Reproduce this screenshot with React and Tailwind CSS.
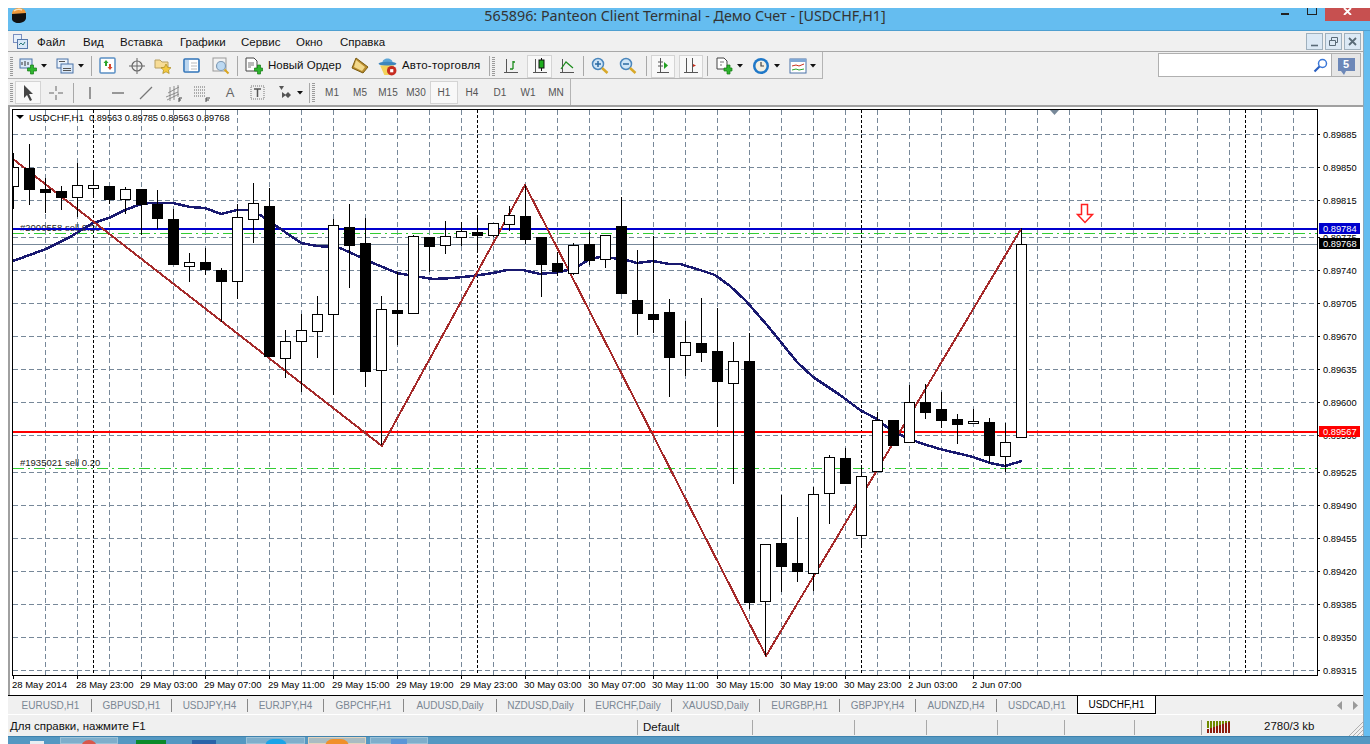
import React from 'react';

const candles = [
  [13, 167, 186, 153, 209, 'w'], [29, 168, 190, 144, 205, 'b'], [45, 189, 193, 178, 213, 'b'], [61, 191, 198, 186, 210, 'b'],
  [77, 185, 197, 163, 217, 'w'], [93, 185, 188, 173, 197, 'w'], [109, 186, 200, 186, 204, 'b'], [125, 189, 199, 187, 214, 'w'],
  [141, 189, 205, 189, 235, 'b'], [157, 204, 219, 190, 229, 'b'], [173, 219, 265, 209, 265, 'b'], [189, 262, 266, 253, 282, 'w'],
  [205, 262, 270, 248, 275, 'b'], [221, 270, 282, 268, 322, 'b'], [237, 217, 281, 204, 299, 'w'], [253, 203, 219, 183, 243, 'w'],
  [269, 206, 357, 188, 357, 'b'], [285, 341, 358, 330, 378, 'w'], [301, 330, 341, 314, 392, 'w'], [317, 314, 331, 296, 358, 'w'],
  [333, 225, 314, 219, 395, 'w'], [349, 227, 246, 204, 288, 'b'], [365, 243, 372, 218, 387, 'b'], [381, 309, 370, 296, 445, 'w'],
  [397, 310, 314, 272, 345, 'b'], [413, 236, 313, 235, 313, 'w'], [429, 237, 247, 237, 272, 'b'], [445, 236, 245, 221, 254, 'w'],
  [461, 231, 237, 222, 246, 'w'], [477, 232, 236, 217, 251, 'b'], [493, 223, 235, 223, 237, 'w'], [509, 215, 224, 206, 231, 'w'],
  [525, 216, 240, 185, 244, 'b'], [541, 237, 265, 237, 297, 'b'], [557, 263, 272, 252, 276, 'b'], [573, 245, 273, 243, 275, 'w'],
  [589, 244, 261, 232, 265, 'b'], [605, 235, 259, 235, 268, 'w'], [621, 226, 294, 197, 294, 'b'], [637, 300, 314, 250, 335, 'b'],
  [653, 314, 320, 236, 333, 'b'], [669, 312, 358, 299, 397, 'b'], [685, 342, 355, 321, 376, 'w'], [701, 343, 353, 298, 362, 'b'],
  [717, 351, 382, 308, 427, 'b'], [733, 361, 383, 342, 484, 'w'], [749, 361, 603, 333, 609, 'b'], [765, 544, 601, 544, 656, 'w'],
  [781, 543, 567, 495, 592, 'b'], [797, 563, 572, 517, 582, 'b'], [813, 494, 573, 487, 591, 'w'], [829, 457, 493, 455, 524, 'w'],
  [845, 458, 484, 448, 484, 'b'], [861, 476, 535, 468, 545, 'w'], [877, 420, 471, 412, 471, 'w'], [893, 420, 446, 420, 446, 'b'],
  [909, 402, 442, 385, 442, 'w'], [925, 402, 413, 384, 419, 'b'], [941, 409, 421, 392, 428, 'b'], [957, 419, 425, 414, 444, 'b'],
  [973, 421, 423, 409, 423, 'w'], [989, 422, 456, 418, 463, 'b'], [1005, 442, 456, 423, 472, 'w'], [1021, 244, 437, 228, 437, 'w'],
];

const maLine = '13,261 46,249 70,237 93,223 109,218 125,210 141,204 150,203 173,203 190,207 205,208 221,214 237,210 248,210 262,216 285,232 301,243 317,246 333,247 340,248 360,257 373,263 397,273 420,277 433,279 453,278 473,276 493,273 507,270 523,270 540,274 560,272 575,268 590,259 600,257 623,259 637,263 653,261 669,264 680,264 700,270 715,275 730,286 745,300 767,325 797,362 813,377 840,395 860,410 877,419 888,428 903,436 920,443 940,449 973,457 990,463 1005,466 1022,461';

const priceRows = [
  [134, '0.89885'], [167, '0.89850'], [200, '0.89815'], [237, '0.89775'], [270, '0.89740'], [303, '0.89705'], [336, '0.89670'], [369, '0.89635'], [402, '0.89600'],
  [435, '0.89560'], [472, '0.89525'], [505, '0.89490'], [538, '0.89455'], [571, '0.89420'], [604, '0.89385'], [637, '0.89350'], [670, '0.89315'],
];

const timeLabels = ['28 May 2014', '28 May 23:00', '29 May 03:00', '29 May 07:00', '29 May 11:00', '29 May 15:00', '29 May 19:00', '29 May 23:00', '30 May 03:00', '30 May 07:00', '30 May 11:00', '30 May 15:00', '30 May 19:00', '30 May 23:00', '2 Jun 03:00', '2 Jun 07:00'];

const gridX = Array.from({ length: 40 }, (_, i) => 45 + i * 32);
const separatorX = [93, 477, 861, 1245];

const tabs = [
  ['EURUSD,H1', 'w-[82px]'], ['GBPUSD,H1', 'w-[80px]'], ['USDJPY,H4', 'w-[76px]'], ['EURJPY,H4', 'w-[76px]'], ['GBPCHF,H1', 'w-[80px]'],
  ['AUDUSD,Daily', 'w-[93px]'], ['NZDUSD,Daily', 'w-[88px]'], ['EURCHF,Daily', 'w-[87px]'], ['XAUUSD,Daily', 'w-[88px]'], ['EURGBP,H1', 'w-[80px]'],
  ['GBPJPY,H4', 'w-[76px]'], ['AUDNZD,H4', 'w-[81px]'], ['USDCAD,H1', 'w-[80px]'],
];

const Grip = ({ className = '' }) => (
  <div className={`w-[3px] h-[19px] shrink-0 bg-[repeating-linear-gradient(to_bottom,#9a9a9a_0,#9a9a9a_1px,transparent_1px,transparent_2px)] ${className}`} />
);

const Sep = ({ className = '' }) => <div className={`w-px h-[20px] shrink-0 bg-[#a8a8a8] ${className}`} />;

const Arrow = ({ className = '' }) => (
  <div className={`w-[6px] shrink-0 flex justify-center ${className}`}>
    <svg width="6" height="4" viewBox="0 0 6 4"><path d="M0 0h6L3 3.500z" fill="#111" /></svg>
  </div>
);

const Slot = ({ className = 'w-7', active, children }) => (
  <div className={`shrink-0 h-[23px] flex items-center justify-center ${active ? 'bg-[#f8f8f8] border border-[#d4d4d4]' : ''} ${className}`}>
    {children}
  </div>
);

const Ico = ({ children, size = 18 }) => (
  <svg width={size} height={size} viewBox="0 0 18 18" fill="none">{children}</svg>
);

const Plus = () => <path d="M10 8h3V5h3v3h3v3h-3v3h-3v-3h-3z" transform="translate(-1.500 3)" fill="#2fb52f" stroke="#127a12" strokeWidth=".7" />;

const NewChartIcon = () => (
  <Ico><rect x="1" y="2" width="12" height="9" fill="#dbe9f8" stroke="#4a73a8" /><path d="M3 8V5M6 9V4M9 8V5" stroke="#333" /><Plus /></Ico>
);
const ProfileIcon = () => (
  <Ico><rect x="1" y="2" width="11" height="9" fill="#eaf2fb" stroke="#4a73a8" /><rect x="5" y="7" width="12" height="9" fill="#dbe9f8" stroke="#4a73a8" /><path d="M3 4.500h6M7 11.500h8M7 13.500h8" stroke="#555" /></Ico>
);
const WatchIcon = () => (
  <Ico><rect x="1" y="1" width="15" height="15" rx="1" fill="#fff" stroke="#5a8fc4" strokeWidth="1.500" /><path d="M6 9V6H4.500L7 3l2.500 3H8v3z" fill="#2da52d" /><path d="M10 7v3H8.500l2.500 3 2.500-3H12V7z" fill="#d9452b" /></Ico>
);
const CrossIcon = () => (
  <Ico><circle cx="9" cy="9" r="5" stroke="#666" strokeWidth="1.200" /><path d="M9 1v16M1 9h16" stroke="#666" /></Ico>
);
const FolderStarIcon = () => (
  <Ico><path d="M1 3h5l2 2h6v6H1z" fill="#f7dc96" stroke="#b8a060" /><path d="M12 7l1.600 3.300 3.400.4-2.500 2.400.7 3.400-3.200-1.700-3.200 1.700.7-3.400L7 10.700l3.400-.4z" fill="#f4c93e" stroke="#a98a20" strokeWidth=".7" /></Ico>
);
const NavIcon = () => (
  <Ico><rect x="1" y="2" width="15" height="13" rx="1" fill="#fff" stroke="#2f73b8" strokeWidth="1.600" /><rect x="2" y="3" width="4" height="11" fill="#bcd6ef" /><path d="M8 6h6M8 9h6M8 12h6" stroke="#bbb" /></Ico>
);
const ZoomDocIcon = () => (
  <Ico><rect x="1" y="1" width="13" height="13" fill="#f2f2f2" stroke="#999" /><circle cx="9" cy="9" r="4.500" fill="#bcd9f2" stroke="#7f9bb5" strokeWidth="1.200" /><path d="M12.500 12.500l4 4" stroke="#d9a520" strokeWidth="2" /></Ico>
);
const OrderIcon = () => (
  <Ico><path d="M1 1h8l3 3v10H1z" fill="#fff" stroke="#444" /><path d="M3 6h6M3 8h6M3 10h3" stroke="#777" /><path d="M10 8h3V5h3v3h2v3h-2v3h-3v-3h-3z" transform="translate(-.5 3)" fill="#2fb52f" stroke="#127a12" strokeWidth=".7" /></Ico>
);
const BookIcon = () => (
  <Ico><path d="M5 1l12 9-5 6-11-5z" fill="#b98c2e" stroke="#7a5c12" /><path d="M5 3l9 7-3 4-8-4z" fill="#f2d88a" /></Ico>
);
const AutoIcon = () => (
  <Ico size={19}><path d="M4 6c0-6 10-6 10 0z" fill="#5ea6d6" /><ellipse cx="9" cy="6.500" rx="8.500" ry="2" fill="#3e86bd" /><path d="M2 8h13v3l-2 6H6z" fill="#f3d25a" /><circle cx="13" cy="13" r="4.500" fill="#c62b20" /><rect x="11.500" y="11.500" width="3" height="3" fill="#fff" /></Ico>
);
const BarsIcon = () => (
  <Ico><path d="M4.500 2v13M2 15.500h14" stroke="#555" /><path d="M11 4v8M11 12H8M11 5h2" stroke="#1d8c1d" strokeWidth="1.300" /></Ico>
);
const CandleIcon = () => (
  <Ico><path d="M4.500 2v13M2 15.500h14" stroke="#555" /><path d="M10.500 1v13" stroke="#111" /><rect x="8" y="3" width="5" height="8" fill="#1fae1f" stroke="#111" /></Ico>
);
const LineIcon = () => (
  <Ico><path d="M4.500 2v13M2 15.500h14" stroke="#555" /><path d="M3 12l5-7 7 6" stroke="#1d8c1d" strokeWidth="1.200" /></Ico>
);
const MagIcon = ({ plus }) => (
  <Ico><circle cx="7" cy="7" r="5.500" fill="#cfe5f7" stroke="#4a86bc" strokeWidth="1.500" /><path d={plus ? 'M4 7h6M7 4v6' : 'M4 7h6'} stroke="#2b6aa3" strokeWidth="1.500" /><path d="M11 11l5.500 5" stroke="#d8a828" strokeWidth="2.500" /></Ico>
);
const ScrollIcon = () => (
  <Ico><path d="M6.500 1v14M3 15.500h12M4 5h5M4 9h5" stroke="#555" /><path d="M10 5l4 3.500-4 3.500z" fill="#22a022" /></Ico>
);
const ShiftIcon = () => (
  <Ico><path d="M4.500 1v14M2 15.500h14M10.500 1v14" stroke="#555" /><path d="M11 7l3 1.500-3 1.500z" fill="#c8321f" /></Ico>
);
const TemplateIcon = () => (
  <Ico><path d="M1 1h7l3 3v8H1z" fill="#fff" stroke="#444" /><path d="M4 5h4M4 8h2" stroke="#777" /><path d="M10 8h3V5h3v3h2v3h-2v3h-3v-3h-3z" transform="translate(-2 3)" fill="#2fb52f" stroke="#127a12" strokeWidth=".7" /></Ico>
);
const ClockIcon = () => (
  <Ico><circle cx="9" cy="9" r="8" fill="#1f78c8" /><circle cx="9" cy="9" r="5.500" fill="#f3efe2" /><path d="M9 5v4h3" stroke="#444" strokeWidth="1.200" /></Ico>
);
const IndicatorIcon = () => (
  <Ico><rect x="1" y="2" width="16" height="14" fill="#fff" stroke="#4a73a8" /><rect x="1" y="2" width="16" height="3" fill="#7fa8d6" /><path d="M3 9l4-1 3 1 5-2" stroke="#c8321f" /><path d="M3 13l4-1 3 1 5-1" stroke="#2da52d" /></Ico>
);

const ChartSvg = () => (
  <svg className="block" width="1353" height="588" viewBox="10 107 1353 588">
    <defs>
      <clipPath id="plot"><rect x="13" y="110" width="1304" height="565" /></clipPath>
    </defs>
    <g shapeRendering="crispEdges">
      {priceRows.map(([y]) => (
        <line key={y} x1="13" x2="1317" y1={y + 0.5} y2={y + 0.5} stroke="#778899" strokeDasharray="5 3" />
      ))}
      {gridX.map((x) => (
        <line key={x} x1={x + 0.5} x2={x + 0.5} y1="110" y2="675" stroke="#778899" strokeDasharray="5 3" />
      ))}
      {separatorX.map((x) => (
        <line key={x} x1={x + 0.5} x2={x + 0.5} y1="110" y2="675" stroke="#000" strokeDasharray="3 2" />
      ))}
    </g>
    <text x="20" y="231" className="text-[9.5px] fill-[#222]">#2000558 sell 0.20</text>
    <text x="20" y="466" className="text-[9.5px] fill-[#222]">#1935021 sell 0.20</text>
    <g shapeRendering="crispEdges">
      <line x1="13" x2="1317" y1="233.500" y2="233.500" stroke="#32cd32" strokeDasharray="11 4 2 4" />
      <line x1="13" x2="1317" y1="468.500" y2="468.500" stroke="#32cd32" strokeDasharray="11 4 2 4" />
      <line x1="13" x2="1317" y1="244.500" y2="244.500" stroke="#778899" />
      <line x1="13" x2="1317" y1="229" y2="229" stroke="#0000cd" strokeWidth="2" />
      <line x1="13" x2="1317" y1="432" y2="432" stroke="#ff0000" strokeWidth="2" />
    </g>
    <g clipPath="url(#plot)">
      <polyline points={maLine} fill="none" stroke="#191970" strokeWidth="2.500" shapeRendering="crispEdges" />
      <polyline points="13,159 382,446 525,185 766,656 1021,229" fill="none" stroke="#a52a2a" strokeWidth="2" shapeRendering="crispEdges" />
      <g shapeRendering="crispEdges">
        {candles.map(([x, top, bottom, high, low, kind]) => (
          <g key={x}>
            <line x1={x + 0.5} x2={x + 0.5} y1={high} y2={low} stroke="#000" />
            {kind === 'b' ? (
              <rect x={x - 5} y={top} width="11" height={bottom - top} fill="#000" />
            ) : (
              <rect x={x - 4.5} y={top + 0.5} width="10" height={bottom - top} fill="#fff" stroke="#000" />
            )}
          </g>
        ))}
      </g>
    </g>
    <path d="M1081.500 204.500h6v10h5l-7.500 8-7.500-8h4z" fill="#fff" stroke="#ff2020" strokeWidth="1.500" />
    <path d="M1050 110h9l-4.500 5z" fill="#778899" />
    <g shapeRendering="crispEdges" stroke="#000">
      <line x1="12.500" x2="12.500" y1="109" y2="676" />
      <line x1="12" x2="1318" y1="109.500" y2="109.500" />
      <line x1="12" x2="1318" y1="675.500" y2="675.500" />
      <line x1="1317.500" x2="1317.500" y1="109" y2="676" />
      {priceRows.map(([y]) => <line key={y} x1="1317" x2="1320" y1={y + 0.5} y2={y + 0.5} />)}
      {timeLabels.map((t, i) => <line key={t} x1={13.5 + i * 64} x2={13.5 + i * 64} y1="675" y2="679" />)}
    </g>
    {priceRows.map(([y, label]) => (
      <text key={label} x="1323" y={y + 3.5} className="text-[9.3px] fill-black">{label}</text>
    ))}
    <rect x="1319" y="223" width="41" height="11" fill="#0000cd" />
    <text x="1323" y="232" className="text-[9.3px] fill-white">0.89784</text>
    <rect x="1319" y="238" width="41" height="11" fill="#000" />
    <text x="1323" y="247" className="text-[9.3px] fill-white">0.89768</text>
    <rect x="1319" y="426" width="41" height="11" fill="#ff0000" />
    <text x="1323" y="435" className="text-[9.3px] fill-white">0.89567</text>
    {timeLabels.map((t, i) => (
      <text key={t} x={12 + i * 64} y="688" className="text-[9.5px] fill-black">{t}</text>
    ))}
    <path d="M16 115h8l-4 4z" fill="#000" />
    <text x="29" y="121" className="text-[9.8px] fill-black">USDCHF,H1</text>
    <text x="89" y="121" className="text-[9.2px] fill-black">0.89563 0.89785 0.89563 0.89768</text>
  </svg>
);

const ConnectionBars = () => (
  <svg width="24" height="14" viewBox="0 0 24 14" shapeRendering="crispEdges">
    {Array.from({ length: 8 }, (_, i) => (
      <g key={i}>
        <rect x={i * 3} y="1" width="2" height={7 - i * 0.5} fill="#6f8a00" />
        <rect x={i * 3} y={9 - i} width="2" height={4 + i} fill="#8f1c0c" />
      </g>
    ))}
  </svg>
);

export default function App() {
  return (
    <div className="w-[1370px] h-[744px] overflow-hidden bg-white pt-2 pl-2 font-['Liberation_Sans',Arial,sans-serif] text-black flex flex-col">
      {/* title bar */}
      <div className="h-[23px] shrink-0 bg-[#65bdf0] border-b border-[#4f9fd0] flex items-start relative">
        <svg className="ml-[3px] shrink-0" width="16" height="15" viewBox="0 0 16 15">
          <path d="M1 6C1 2 4 0 8 0s7 2 7 6z" fill="#ef9a3c" />
          <path d="M1 6l14-1v5c0 3-4 5-8 5-3 0-6-2-6-4z" fill="#111" />
          <path d="M3 3c2-2 6-2 8-1" stroke="#fbe2b8" strokeWidth="1.500" fill="none" />
        </svg>
        <div className="w-[1170px] shrink-0 ml-[73px] text-center text-[14.300px] leading-[16px] text-[#333] font-['Noto_Sans',sans-serif]">
          565896: Panteon Client Terminal - Демо Счет - [USDCHF,H1]
        </div>
        <div className="ml-auto flex items-start">
          <div className="w-[8px] h-[2px] bg-[#222] mt-[5px] mr-[18px]" />
          <div className="w-[10px] h-[7px] border border-[#222] border-t-0 mr-[8px]" />
          <div className="w-[45px] h-[13px] bg-[#c75050] flex justify-center overflow-hidden">
            <svg width="9" height="7" viewBox="0 0 9 7"><path d="M1 0l3.500 3.500L8 0M1 7l3.500-3.500L8 7" stroke="#fff" strokeWidth="1.800" fill="none" /></svg>
          </div>
        </div>
      </div>

      <div className="flex-1 flex min-h-0">
        <div className="w-[1355px] shrink-0 bg-[#f0f0f0] flex flex-col">
          {/* menu */}
          <div className="h-[21px] shrink-0 border-b border-[#a8a8a8] flex items-center text-[11.500px] leading-[16px] text-[#111]">
            <svg className="ml-[5px] shrink-0" width="15" height="15" viewBox="0 0 15 15">
              <rect x=".5" y=".5" width="8" height="8" fill="#e7f0fa" stroke="#7a8fc0" />
              <rect x="4.500" y="5.500" width="10" height="9" fill="#d7e6f7" stroke="#5577aa" />
              <path d="M6 11l2-2 2 2 2-3" stroke="#2c7a7a" fill="none" />
            </svg>
            <span className="ml-[9px] mt-[2px] w-[46px]">Файл</span>
            <span className="mt-[2px] w-[37px]">Вид</span>
            <span className="mt-[2px] w-[60px]">Вставка</span>
            <span className="mt-[2px] w-[61px]">Графики</span>
            <span className="mt-[2px] w-[55px]">Сервис</span>
            <span className="mt-[2px] w-[44px]">Окно</span>
            <span className="mt-[2px]">Справка</span>
            <div className="ml-auto mr-[2px] flex gap-[2px]">
              {['min', 'restore', 'close'].map((name) => (
                <div key={name} className="w-[17px] h-[17px] bg-[#dce9f5] border border-[#9fb0bd] flex items-center justify-center">
                  <svg width="11" height="11" viewBox="0 0 11 11" fill="none" stroke="#5a6b78">
                    {name === 'min' && <path d="M2 9.500h7" strokeWidth="1.600" />}
                    {name === 'restore' && <path d="M1.500 4.500h6v5h-6zM3.500 4V1.500h6v5H8" />}
                    {name === 'close' && <path d="M2 2l7 7M9 2l-7 7" strokeWidth="1.800" />}
                  </svg>
                </div>
              ))}
            </div>
          </div>

          {/* main toolbar */}
          <div className="h-[27px] shrink-0 flex">
            <div className="w-[815px] shrink-0 border-b border-r border-[#b4b4b4] pt-[2px] flex items-center text-[11.500px] text-[#111]">
              <Grip className="ml-[2px] mr-px" />
              <Slot className="w-[27px]"><NewChartIcon /></Slot>
              <Arrow />
              <Slot className="w-[26px] ml-[5px]"><ProfileIcon /></Slot>
              <Arrow />
              <Sep className="ml-[7px]" />
              <Slot className="w-7 ml-[2px]"><WatchIcon /></Slot>
              <Slot className="w-[30px]"><CrossIcon /></Slot>
              <Slot className="w-[22px]"><FolderStarIcon /></Slot>
              <Slot className="w-9"><NavIcon /></Slot>
              <Slot className="w-[22px]"><ZoomDocIcon /></Slot>
              <Sep className="ml-[5px]" />
              <Slot className="w-5 ml-[6px]"><OrderIcon /></Slot>
              <span className="ml-1 w-[74px] whitespace-nowrap">Новый Ордер</span>
              <Slot className="w-5 ml-2"><BookIcon /></Slot>
              <Slot className="w-5 ml-[7px]"><AutoIcon /></Slot>
              <span className="ml-[5px] w-[78px] tracking-[0.2px] whitespace-nowrap">Авто-торговля</span>
              <Sep className="ml-[9px]" />
              <Grip className="ml-[2px]" />
              <Slot className="w-7 ml-[2px]"><BarsIcon /></Slot>
              <Slot className="w-[25px] ml-[2px]" active><CandleIcon /></Slot>
              <Slot className="w-7 ml-px"><LineIcon /></Slot>
              <Sep className="ml-[2px]" />
              <Slot className="w-7 ml-[2px]"><MagIcon plus /></Slot>
              <Slot className="w-7"><MagIcon /></Slot>
              <Sep className="ml-1" />
              <Slot className="w-6 ml-1" active><ScrollIcon /></Slot>
              <Slot className="w-6 ml-1" active><ShiftIcon /></Slot>
              <Sep className="ml-1" />
              <Slot className="w-6 ml-[5px]"><TemplateIcon /></Slot>
              <Arrow />
              <Slot className="w-[22px] ml-[7px]"><ClockIcon /></Slot>
              <Arrow className="ml-[2px]" />
              <Slot className="w-[22px] ml-[7px]"><IndicatorIcon /></Slot>
              <Arrow className="ml-px" />
            </div>
            <div className="ml-auto mr-[2px] mt-px h-[24px] flex border border-[#b0b0b0]">
              <div className="w-[172px] bg-white flex items-center justify-end pr-[3px]">
                <svg width="15" height="15" viewBox="0 0 15 15" fill="none">
                  <circle cx="9.500" cy="5.500" r="4" stroke="#3b78d8" strokeWidth="1.500" />
                  <path d="M6.500 8.500L1.500 13.500" stroke="#2a5fc0" strokeWidth="2.200" />
                </svg>
              </div>
              <div className="w-[29px] bg-[#e6e6e6] border-l border-[#b0b0b0] flex items-center justify-center">
                <div className="relative w-[17px] h-[13px] bg-[#6d88b8] text-white text-[11px] leading-[13px] text-center font-bold mb-[2px]">
                  5
                  <svg className="absolute left-[3px] top-[13px]" width="5" height="4" viewBox="0 0 5 4"><path d="M0 0h5L3 4z" fill="#6d88b8" /></svg>
                </div>
              </div>
            </div>
          </div>

          {/* drawing tools and periods */}
          <div className="h-[26px] shrink-0 w-[563px] border-r border-[#b4b4b4] pt-px flex items-center text-[10px] text-[#555]">
            <Grip className="ml-[2px] mr-px" />
            <Slot className="w-[26px] ml-px" active>
              <Ico><path d="M5 1v13l3-3 3 6 2-1-3-6h4z" fill="#444" /></Ico>
            </Slot>
            <Slot className="w-[29px]"><Ico><path d="M9 2v5M9 11v5M2 9h5M11 9h5" stroke="#666" /></Ico></Slot>
            <Sep className="ml-[3px] mr-[2px]" />
            <Slot><Ico><path d="M9 3v12" stroke="#666" strokeWidth="1.300" /></Ico></Slot>
            <Slot><Ico><path d="M3 9h12" stroke="#666" strokeWidth="1.300" /></Ico></Slot>
            <Slot><Ico><path d="M3 15L15 3" stroke="#777" strokeWidth="1.200" /></Ico></Slot>
            <Slot>
              <Ico><path d="M1 13l12-5M2 16l12-6M3 9l11-6M5 3v14M9 2v14M13 1v12" stroke="#777" strokeWidth=".8" /><path d="M14 14h3M14 14v4M14 16h2" stroke="#444" /></Ico>
            </Slot>
            <Slot>
              <Ico><path d="M1 3h12M1 6h12M1 9h12M1 12h12" stroke="#666" strokeDasharray="1 1" /><path d="M13 14h4M13 14v4M13 16h3" stroke="#444" /></Ico>
            </Slot>
            <Slot><span className="text-[13px] text-[#666] leading-none">A</span></Slot>
            <Slot>
              <Ico><rect x="2" y="2" width="13" height="13" stroke="#777" strokeDasharray="1 1" /><path d="M5 5h7M8.500 5v8" stroke="#555" strokeWidth="1.500" /></Ico>
            </Slot>
            <Slot>
              <Ico><path d="M2 2h5L4.500 6zM5 8l4 3-4 3zM11 8l3 3-3 3-3-3z" fill="#555" /></Ico>
            </Slot>
            <Arrow className="ml-[-3px] mr-[3px]" />
            <Sep className="ml-[3px] mr-[2px]" />
            <Grip className="mr-[3px]" />
            {['M1', 'M5', 'M15', 'M30', 'H1', 'H4', 'D1', 'W1', 'MN'].map((period) => (
              <Slot key={period} className={period === 'H1' ? 'w-7 bg-[#f8f8f8] border border-[#d4d4d4]' : 'w-7'}>
                {period}
              </Slot>
            ))}
          </div>

          {/* chart */}
          <div className="border-t-2 border-l-2 border-[#a0a0a0] bg-white h-[590px] shrink-0">
            <ChartSvg />
          </div>

          {/* tabs */}
          <div className="h-[20px] shrink-0 border-t border-black flex pl-[2px] text-[10px] text-[#7b8794] border-b border-b-white">
            <div className="flex items-center h-[18px]">
              {tabs.map(([name, width], i) => (
                <div key={name} className={`h-[13px] leading-[13px] text-center whitespace-nowrap ${width} ${i === tabs.length - 1 ? '' : 'border-r border-[#888]'}`}>
                  {name}
                </div>
              ))}
            </div>
            <div className="w-[79px] h-[18px] bg-white border-x border-b border-black text-black text-center leading-[17px]">USDCHF,H1</div>
            <div className="ml-auto mr-[5px] flex items-center gap-[11px] h-[18px]">
              <svg width="5" height="9" viewBox="0 0 5 9"><path d="M5 0v9L0 4.500z" fill="#9a9a9a" /></svg>
              <svg width="5" height="9" viewBox="0 0 5 9"><path d="M0 0v9l5-4.500z" fill="#9a9a9a" /></svg>
            </div>
          </div>

          {/* status bar */}
          <div className="flex-1 flex items-center pt-[3px] text-[11.500px] text-[#111] relative">
            <div className="w-[629px] pl-[2px] whitespace-nowrap">Для справки, нажмите F1</div>
            <div className="w-[115px] h-[15px] border-l border-[#a8a8a8] pl-[5px] leading-[15px]">Default</div>
            <div className="w-[102px] h-[15px] border-l border-[#a8a8a8]" />
            <div className="w-[72px] h-[15px] border-l border-[#a8a8a8]" />
            <div className="w-[71px] h-[15px] border-l border-[#a8a8a8]" />
            <div className="w-[67px] h-[15px] border-l border-[#a8a8a8]" />
            <div className="w-[70px] h-[15px] border-l border-[#a8a8a8]" />
            <div className="w-[67px] h-[15px] border-l border-[#a8a8a8]" />
            <div className="flex-1 h-[15px] border-l border-[#a8a8a8] flex items-center pl-[5px]">
              <ConnectionBars />
              <span className="ml-[33px]">2780/3 kb</span>
            </div>
            <svg className="absolute right-0 bottom-0" width="15" height="15" viewBox="0 0 15 15" stroke="#b0b0b0">
              <path d="M15 1L1 15M15 5L5 15M15 9l-6 6M15 13l-2 2" />
            </svg>
          </div>
        </div>
        <div className="flex-1 bg-[#65bdf0] border-l border-[#8fa9ba]" />
      </div>

      {/* taskbar */}
      <div className="h-2 shrink-0 bg-[#5498c2] border-t border-[#3f82ad] flex overflow-hidden relative">
        <div className="w-[14px] h-[4px] mt-[4px] ml-[22px] bg-[#e8eef2]" />
        <div className="w-[58px] ml-[16px] bg-[#7eaecb] border border-[#9cc2d8] flex justify-center"><div className="w-[16px] h-[16px] rounded-full bg-[#d9574a] mt-[2px]" /></div>
        <div className="w-[30px] ml-[18px] mt-[3px] bg-[#0a8a2a]" />
        <div className="w-[24px] ml-[26px] mt-[3px] bg-[#2a63a8]" />
        <div className="w-[59px] ml-[30px] bg-[#7eaecb] border border-[#9cc2d8] flex justify-center"><div className="w-[22px] h-[16px] rounded-full bg-[#19a4e8] mt-[1px]" /></div>
        <div className="w-[58px] ml-[3px] bg-[#a9bcc2] border border-[#e3d3bd] flex justify-center"><div className="w-[24px] h-[16px] rounded-full bg-[#f0902a] mt-[1px]" /></div>
        <div className="w-[58px] ml-[4px] bg-[#7eaecb] border border-[#9cc2d8] flex justify-center"><div className="w-[16px] h-[8px] bg-[#5a96d8] mt-[1px]" /></div>
      </div>
    </div>
  );
}
